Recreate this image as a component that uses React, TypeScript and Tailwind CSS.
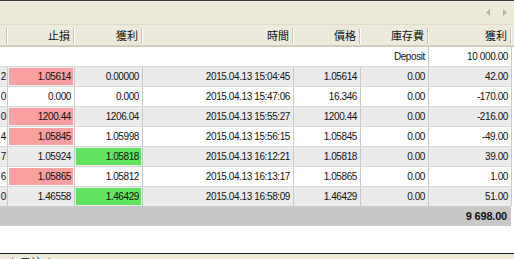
import React from 'react'

type Row = {
  c0: string
  sl: string
  slHit?: 'pink' | 'green'
  tp: string
  tpHit?: 'pink' | 'green'
  time: string
  price: string
  swap: string
  profit: string
}

const rows: Row[] = [
  { c0: '2', sl: '1.05614', slHit: 'pink', tp: '0.00000', time: '2015.04.13 15:04:45', price: '1.05614', swap: '0.00', profit: '42.00' },
  { c0: '0', sl: '0.000', tp: '0.000', time: '2015.04.13 15:47:06', price: '16.346', swap: '0.00', profit: '-170.00' },
  { c0: '0', sl: '1200.44', slHit: 'pink', tp: '1206.04', time: '2015.04.13 15:55:27', price: '1200.44', swap: '0.00', profit: '-216.00' },
  { c0: '4', sl: '1.05845', slHit: 'pink', tp: '1.05998', time: '2015.04.13 15:56:15', price: '1.05845', swap: '0.00', profit: '-49.00' },
  { c0: '7', sl: '1.05924', tp: '1.05818', tpHit: 'green', time: '2015.04.13 16:12:21', price: '1.05818', swap: '0.00', profit: '39.00' },
  { c0: '6', sl: '1.05865', slHit: 'pink', tp: '1.05812', time: '2015.04.13 16:13:17', price: '1.05865', swap: '0.00', profit: '1.00' },
  { c0: '0', sl: '1.46558', tp: '1.46429', tpHit: 'green', time: '2015.04.13 16:58:09', price: '1.46429', swap: '0.00', profit: '51.00' },
]

const num = "font-['Liberation_Sans',Arial,sans-serif] text-[10px] tracking-[-0.4px] text-[#111]"
const cjk = "font-['Noto_Sans_CJK_TC','Noto_Sans_CJK_SC',sans-serif] text-[11px] text-[#111]"

function HeadCell({ w, label }: { w: string; label: string }) {
  return (
    <div className={`${w} relative flex h-full items-center justify-end pr-[5px] ${cjk}`}>
      {label}
      <span className="absolute right-0 top-[3px] h-[16px] w-[2px] border-l border-l-[#c7c5b2] border-r border-r-white" />
    </div>
  )
}

function Cell({ w, text, hit }: { w: string; text: string; hit?: 'pink' | 'green' }) {
  const fill = hit === 'pink' ? 'bg-[#f9a0a0]' : hit === 'green' ? 'bg-[#62e462]' : ''
  return (
    <div className={`${w} h-full shrink-0 border-r border-r-[#c9c9c9] p-px`}>
      <div className={`flex h-full items-center justify-end pr-[2px] ${fill} ${num}`}>{text}</div>
    </div>
  )
}

export default function App() {
  return (
    <div className="h-[259px] w-[514px] overflow-hidden bg-white">
      <div className="h-px bg-[#3a3a3a]" />
      {/* toolbar strip with scroll arrows */}
      <div className="flex h-[23px] items-center justify-end gap-[13px] bg-[#ece9d8] pr-[7px]">
        <svg width="4" height="7" viewBox="0 0 4 7">
          <path d="M4 0 L0 3.5 L4 7 Z" fill="#b5b2a3" />
        </svg>
        <svg width="4" height="7" viewBox="0 0 4 7">
          <path d="M0 0 L4 3.5 L0 7 Z" fill="#b5b2a3" />
        </svg>
      </div>
      {/* column header */}
      <div className="h-px bg-[#dedbc9]" />
      <div className="flex h-[20px] bg-[#ebeadb]">
        <HeadCell w="w-[8px]" label="" />
        <HeadCell w="w-[67px]" label="止損" />
        <HeadCell w="w-[68px]" label="獲利" />
        <HeadCell w="w-[151px]" label="時間" />
        <HeadCell w="w-[67px]" label="價格" />
        <HeadCell w="w-[68px]" label="庫存費" />
        <HeadCell w="w-[83px]" label="獲利" />
        <div className="flex-1" />
      </div>
      <div className="h-px bg-[#d6d2c2]" />
      <div className="h-px bg-[#cbc7b8]" />

      {/* deposit row */}
      <div className="flex h-[19px]">
        <div className={`flex w-[429px] items-center justify-end border-r border-r-[#c9c9c9] pr-[3px] ${num}`}>Deposit</div>
        <div className={`flex w-[83px] items-center justify-end border-r border-r-[#c9c9c9] pr-[3px] ${num}`}>10 000.00</div>
      </div>

      {rows.map((r, i) => (
        <div
          key={i}
          className={`flex h-[20px] w-[512px] border-t border-t-[#d9d9d9] ${i % 2 === 0 ? 'bg-[#ebebeb]' : 'bg-white'}`}
        >
          <div className={`flex h-full w-[8px] shrink-0 items-center justify-end overflow-hidden border-r border-r-[#c9c9c9] pr-px ${num}`}>
            {r.c0}
          </div>
          <Cell w="w-[67px]" text={r.sl} hit={r.slHit} />
          <Cell w="w-[68px]" text={r.tp} hit={r.tpHit} />
          <Cell w="w-[151px]" text={r.time} />
          <Cell w="w-[67px]" text={r.price} />
          <Cell w="w-[68px]" text={r.swap} />
          <Cell w="w-[83px]" text={r.profit} />
        </div>
      ))}

      {/* total */}
      <div className="flex h-[20px] w-[511px] items-center justify-end bg-[#c8c8c8] pr-[4px] font-['Liberation_Sans',Arial,sans-serif] text-[11px] font-bold tracking-[-0.2px] text-[#111]">
        9 698.00
      </div>
      <div className="h-[27px]" />
      <div className="h-px bg-[#1e1e1e]" />
      <div className="flex h-[10px] items-start gap-[6px] bg-[#ece9d8] pl-[11px] pt-[2px] text-[11px] leading-[12px] text-[#333]">
        <span className="font-['Liberation_Sans',sans-serif]">|</span>
        <span className={cjk}>日誌</span>
        <span className="font-['Liberation_Sans',sans-serif]">|</span>
      </div>
    </div>
  )
}
